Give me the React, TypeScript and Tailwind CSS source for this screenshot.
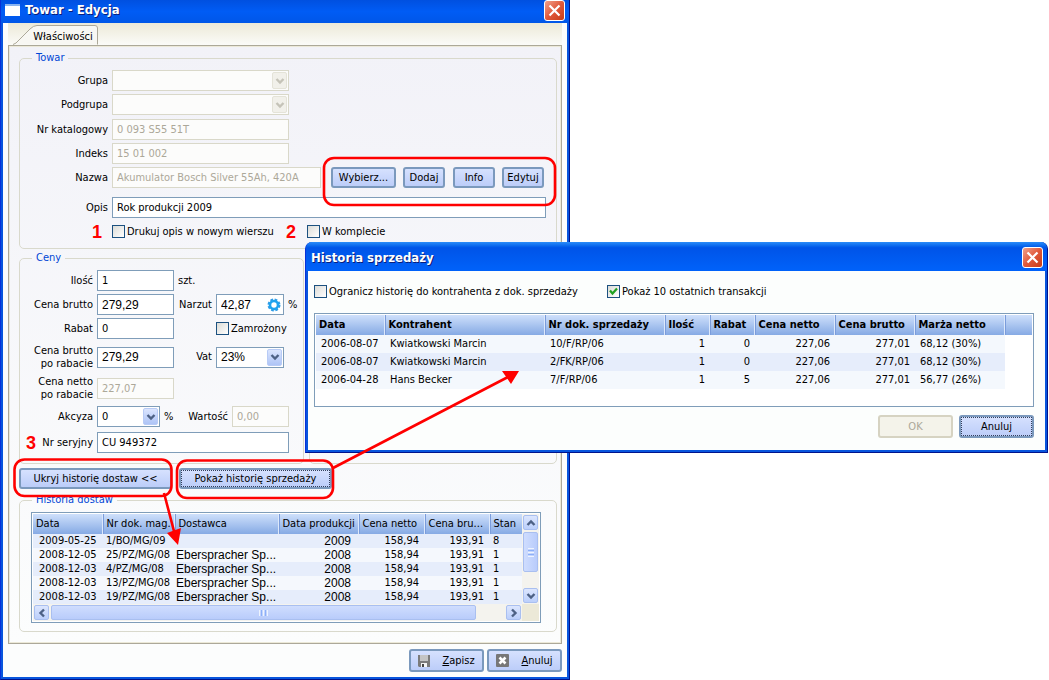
import React from 'react';
import { clsx } from 'clsx';

interface Delivery {
  date: string;
  doc: string;
  supplier: string;
  year: string;
  net: string;
  gross: string;
  stock: string;
}

interface Sale {
  date: string;
  client: string;
  doc: string;
  qty: string;
  discount: string;
  net: string;
  gross: string;
  margin: string;
}

const deliveries: Delivery[] = [
  { date: '2009-05-25', doc: '1/BO/MG/09', supplier: '', year: '2009', net: '158,94', gross: '193,91', stock: '8' },
  { date: '2008-12-05', doc: '25/PZ/MG/08', supplier: 'Eberspracher Sp...', year: '2008', net: '158,94', gross: '193,91', stock: '1' },
  { date: '2008-12-03', doc: '4/PZ/MG/08', supplier: 'Eberspracher Sp...', year: '2008', net: '158,94', gross: '193,91', stock: '1' },
  { date: '2008-12-03', doc: '13/PZ/MG/08', supplier: 'Eberspracher Sp...', year: '2008', net: '158,94', gross: '193,91', stock: '1' },
  { date: '2008-12-03', doc: '19/PZ/MG/08', supplier: 'Eberspracher Sp...', year: '2008', net: '158,94', gross: '193,91', stock: '1' },
];

const sales: Sale[] = [
  { date: '2006-08-07', client: 'Kwiatkowski Marcin', doc: '10/F/RP/06', qty: '1', discount: '0', net: '227,06', gross: '277,01', margin: '68,12 (30%)' },
  { date: '2006-08-07', client: 'Kwiatkowski Marcin', doc: '2/FK/RP/06', qty: '1', discount: '0', net: '227,06', gross: '277,01', margin: '68,12 (30%)' },
  { date: '2006-04-28', client: 'Hans Becker', doc: '7/F/RP/06', qty: '1', discount: '5', net: '227,06', gross: '277,01', margin: '56,77 (26%)' },
];

const chevrons = {
  down: 'M0.500 2L4 5.500 7.500 2',
  up: 'M0.500 6L4 2.500 7.500 6',
  left: 'M6 0.500L2.500 4 6 7.500',
  right: 'M2 0.500L5.500 4 2 7.500',
};

function Chevron({ dir }: { dir: keyof typeof chevrons }) {
  return (
    <svg viewBox="0 0 8 8" className="h-2 w-2 overflow-visible" fill="none" stroke="currentColor" strokeWidth="2.4">
      <path d={chevrons[dir]} />
    </svg>
  );
}

function CloseButton() {
  return (
    <button
      aria-label="Zamknij"
      className="flex h-[21px] w-[21px] items-center justify-center rounded-[3px] border border-white bg-linear-to-br from-[#f0a08a] via-[#e0583a] to-[#c83c14]"
    >
      <svg viewBox="0 0 13 13" className="h-[13px] w-[13px]" stroke="#fff" strokeWidth="2.2">
        <path d="M1.500 1.500l10 10M11.500 1.500l-10 10" />
      </svg>
    </button>
  );
}

interface TextFieldProps {
  id: string;
  value: string;
  className: string;
  disabled?: boolean;
  large?: boolean;
}

function TextField({ id, value, className, disabled, large }: TextFieldProps) {
  return (
    <input
      id={id}
      type="text"
      defaultValue={value}
      disabled={disabled}
      className={clsx(
        'h-[21px] min-w-0 border px-1 outline-none',
        large && 'font-["Liberation_Sans",sans-serif] text-[12px]',
        disabled ? 'border-[#d9d8c9] bg-[#fcfcfb] text-[#aca899]' : 'border-[#7f9db9] bg-white text-black',
        className,
      )}
    />
  );
}

function SelectField({ id, value, className, disabled, large }: TextFieldProps) {
  return (
    <div className={clsx('relative h-[21px]', className)}>
      <select
        id={id}
        disabled={disabled}
        defaultValue={value}
        className={clsx(
          'h-full w-full appearance-none border px-1 outline-none',
          large && 'font-["Liberation_Sans",sans-serif] text-[12px]',
          disabled ? 'border-[#d9d8c9] bg-[#fcfcfb] opacity-100' : 'border-[#7f9db9] bg-white text-black',
        )}
      >
        <option value={value}>{value}</option>
      </select>
      <span
        className={clsx(
          'pointer-events-none absolute inset-y-0.5 right-0.5 flex w-[15px] items-center justify-center rounded-[2px] border',
          disabled
            ? 'border-[#e4e3d8] bg-[#f1f0ea] text-[#c5c3b8]'
            : 'border-[#b8cbf6] bg-linear-to-b from-[#dbe5fe] to-[#aec4f6] text-[#4d6185]',
        )}
      >
        <Chevron dir="down" />
      </span>
    </div>
  );
}

function CheckField({ id, label, checked }: { id: string; label: string; checked?: boolean }) {
  return (
    <div className="flex h-[13px] items-center gap-0.5 whitespace-nowrap">
      <span className="relative flex">
        <input
          id={id}
          type="checkbox"
          defaultChecked={checked}
          className="peer h-[13px] w-[13px] appearance-none border border-[#1c5180] bg-linear-to-br from-[#dcdcd7] to-white"
        />
        <svg
          viewBox="0 0 13 13"
          className="pointer-events-none absolute inset-0 hidden h-[13px] w-[13px] peer-checked:block"
          fill="none"
          stroke="#21a121"
          strokeWidth="2.2"
        >
          <path d="M3 5.500l2.500 3L10 3.500" />
        </svg>
      </span>
      <label htmlFor={id}>{label}</label>
    </div>
  );
}

interface PushButtonProps {
  className: string;
  children: React.ReactNode;
  disabled?: boolean;
  focused?: boolean;
}

function PushButton({ className, children, disabled, focused }: PushButtonProps) {
  return (
    <button
      disabled={disabled}
      className={clsx(
        'rounded-[3px] border-2 whitespace-nowrap',
        disabled
          ? 'border-[#d6d3c2] bg-[#f4f3ea] text-[#aca899]'
          : 'border-[#7b99bd] bg-linear-to-b from-[#d6e1fe] to-[#bccdf9] text-black',
        className,
      )}
    >
      <span
        className={clsx(
          'flex h-full w-full items-center justify-center border',
          focused ? 'border-dotted border-[#33405c]' : 'border-transparent',
        )}
      >
        {children}
      </span>
    </button>
  );
}

function Group({ title, className, children }: { title: string; className?: string; children?: React.ReactNode }) {
  return (
    <fieldset className={clsx('min-w-0 rounded-[5px] border border-[#d9d9cc] pt-[5px]', className)}>
      <legend className="ml-3 h-3.5 px-1 leading-[14px] text-[#0046d5]">{title}</legend>
      {children}
    </fieldset>
  );
}

function ItemLabel({ htmlFor, children }: { htmlFor: string; children: React.ReactNode }) {
  return (
    <label htmlFor={htmlFor} className="w-[88px] shrink-0 text-right whitespace-nowrap">
      {children}
    </label>
  );
}

function PriceLabel({ htmlFor, children }: { htmlFor: string; children: React.ReactNode }) {
  return (
    <label htmlFor={htmlFor} className="flex w-[73px] shrink-0 flex-col text-right leading-[13px] whitespace-nowrap">
      {children}
    </label>
  );
}

function SideLabel({ htmlFor, children }: { htmlFor: string; children: React.ReactNode }) {
  return (
    <label htmlFor={htmlFor} className="flex w-[34px] shrink-0 justify-end">
      {children}
    </label>
  );
}

function Marker({ children }: { children: React.ReactNode }) {
  return (
    <span className='font-["Liberation_Sans",sans-serif] text-[18px] leading-none font-bold text-[#ff0000]'>
      {children}
    </span>
  );
}

function ScrollButton({ dir, label }: { dir: keyof typeof chevrons; label: string }) {
  return (
    <button
      aria-label={label}
      className="flex h-[15px] w-[15px] shrink-0 items-center justify-center rounded-[2px] border border-[#a9bff0] bg-linear-to-b from-[#dce6fe] to-[#bbcffb] text-[#4d6185]"
    >
      <Chevron dir={dir} />
    </button>
  );
}

function ItemGroup() {
  return (
    <Group title="Towar" className="pr-2.5 pb-2.5">
      <div className="flex flex-col gap-1">
        <div className="flex flex-col gap-[3px]">
          <div className="flex items-center gap-1">
            <ItemLabel htmlFor="group">Grupa</ItemLabel>
            <SelectField id="group" value="" disabled className="w-[177px]" />
          </div>
          <div className="flex items-center gap-1">
            <ItemLabel htmlFor="subgroup">Podgrupa</ItemLabel>
            <SelectField id="subgroup" value="" disabled className="w-[177px]" />
          </div>
        </div>
        <div className="flex flex-col gap-[3px]">
          <div className="flex items-center gap-1">
            <ItemLabel htmlFor="catalog">Nr katalogowy</ItemLabel>
            <TextField id="catalog" value="0 093 S55 51T" disabled className="w-[177px]" />
          </div>
          <div className="flex items-center gap-1">
            <ItemLabel htmlFor="index">Indeks</ItemLabel>
            <TextField id="index" value="15 01 002" disabled className="w-[177px]" />
          </div>
          <div className="flex items-center gap-1">
            <ItemLabel htmlFor="name">Nazwa</ItemLabel>
            <TextField id="name" value="Akumulator Bosch Silver 55Ah, 420A" disabled className="flex-1" />
            <div className="flex gap-[7px] pr-0.5 pl-1.5">
              <PushButton className="h-[21px] w-[65px]">Wybierz...</PushButton>
              <PushButton className="mr-px h-[21px] w-[42px]">Dodaj</PushButton>
              <PushButton className="h-[21px] w-[42px]">Info</PushButton>
              <PushButton className="h-[21px] w-[42px]">Edytuj</PushButton>
            </div>
          </div>
        </div>
      </div>
      <div className="mt-[9px] flex items-center gap-1">
        <ItemLabel htmlFor="description">Opis</ItemLabel>
        <TextField id="description" value="Rok produkcji 2009" className="flex-1" />
      </div>
      <div className="mt-[7px] flex h-[13px] items-center">
        <div className="flex w-[92px] justify-end pr-2.5">
          <Marker>1</Marker>
        </div>
        <div className="w-[174px]">
          <CheckField id="print-desc" label="Drukuj opis w nowym wierszu" />
        </div>
        <div className="flex w-[21px]">
          <Marker>2</Marker>
        </div>
        <CheckField id="in-set" label="W komplecie" />
      </div>
    </Group>
  );
}

function PriceGroup() {
  return (
    <Group title="Ceny" className="w-[285px] pb-2.5">
      <div className="flex flex-col gap-[5px]">
        <div className="flex flex-col gap-[3px]">
          <div className="flex items-center gap-1">
            <PriceLabel htmlFor="qty">Ilość</PriceLabel>
            <TextField id="qty" value="1" className="w-[77px]" />
            <span>szt.</span>
          </div>
          <div className="flex items-center gap-1">
            <PriceLabel htmlFor="gross">Cena brutto</PriceLabel>
            <TextField id="gross" value="279,29" large className="w-[77px]" />
            <SideLabel htmlFor="markup">Narzut</SideLabel>
            <div className="relative flex">
              <TextField id="markup" value="42,87" large className="w-[68px]" />
              <button aria-label="Przelicz" className="absolute inset-y-0 right-[3px] flex items-center">
                <svg viewBox="0 0 14 14" className="h-3.5 w-3.5" fill="none">
                  <circle cx="7" cy="7" r="5.500" stroke="#2f9be6" strokeWidth="2" strokeDasharray="2.700 1.620" />
                  <circle cx="7" cy="7" r="4" stroke="#1fa2ee" strokeWidth="2.600" />
                </svg>
              </button>
            </div>
            <span>%</span>
          </div>
          <div className="flex items-center gap-1">
            <PriceLabel htmlFor="discount">Rabat</PriceLabel>
            <TextField id="discount" value="0" className="w-[77px]" />
            <div className="pl-[38px]">
              <CheckField id="frozen" label="Zamrożony" />
            </div>
          </div>
        </div>
        <div className="flex h-[26px] items-center gap-1">
          <PriceLabel htmlFor="gross-after">
            <span>Cena brutto</span>
            <span>po rabacie</span>
          </PriceLabel>
          <TextField id="gross-after" value="279,29" large className="w-[77px]" />
          <SideLabel htmlFor="vat">Vat</SideLabel>
          <SelectField id="vat" value="23%" large className="w-[68px]" />
        </div>
        <div className="flex h-[26px] items-center gap-1">
          <PriceLabel htmlFor="net-after">
            <span>Cena netto</span>
            <span>po rabacie</span>
          </PriceLabel>
          <TextField id="net-after" value="227,07" disabled className="w-[77px]" />
        </div>
        <div className="flex items-center gap-1 pr-3.5">
          <PriceLabel htmlFor="excise">Akcyza</PriceLabel>
          <SelectField id="excise" value="0" className="w-[63px]" />
          <span>%</span>
          <label htmlFor="excise-value" className="flex-1 text-right">
            Wartość
          </label>
          <TextField id="excise-value" value="0,00" disabled className="w-[57px]" />
        </div>
        <div className="flex items-center gap-1 pr-3.5">
          <div className="flex w-[73px] items-center justify-between pl-1.5">
            <Marker>3</Marker>
            <label htmlFor="serial">Nr seryjny</label>
          </div>
          <TextField id="serial" value="CU 949372" className="flex-1" />
        </div>
      </div>
    </Group>
  );
}

const headerCell =
  'border-r border-[#7a9cdb] pr-1 pl-[3px] text-left shadow-[inset_-1px_0_#dce8fb] last:border-r-0 last:shadow-none';

function DeliveryTable() {
  return (
    <div className="mr-[15px] ml-[11px] flex border border-[#7f9db9] bg-white p-px">
      <div className="min-w-0 flex-1">
        <table className="w-full table-fixed border-collapse whitespace-nowrap">
          <colgroup>
            <col className="w-[70px]" />
            <col className="w-[72px]" />
            <col />
            <col className="w-[80px]" />
            <col className="w-[66px]" />
            <col className="w-[65px]" />
            <col className="w-[32px]" />
          </colgroup>
          <thead>
            <tr className="h-5 bg-linear-to-b from-[#cfe0fb] to-[#86aae4]">
              {['Data', 'Nr dok. mag.', 'Dostawca', 'Data produkcji', 'Cena netto', 'Cena bru...', 'Stan'].map((h) => (
                <th key={h} className={clsx(headerCell, 'font-normal')}>
                  {h}
                </th>
              ))}
            </tr>
          </thead>
          <tbody className="leading-[14px]">
            {deliveries.map((d, i) => (
              <tr key={i} className="h-3.5 odd:bg-[#e6edfb] even:bg-[#f5f8fd]">
                <td className="pl-1.5">{d.date}</td>
                <td className="pl-[3px]">{d.doc}</td>
                <td className='pl-px font-["Liberation_Sans",sans-serif] text-[12px]'>{d.supplier}</td>
                <td className='pr-2 text-right font-["Liberation_Sans",sans-serif] text-[12px]'>{d.year}</td>
                <td className="pr-1.5 text-right">{d.net}</td>
                <td className="pr-1.5 text-right">{d.gross}</td>
                <td className="pl-[3px]">{d.stock}</td>
              </tr>
            ))}
          </tbody>
        </table>
        <div className="flex h-[17px] items-center gap-0.5 bg-[#f4f3ee] px-px">
          <ScrollButton dir="left" label="Przewiń w lewo" />
          <div className="flex h-[15px] w-[425px] items-center justify-center gap-px rounded-[2px] border border-[#a9bff0] bg-linear-to-b from-[#cfddfe] to-[#b9ccfb]">
            <span className="h-1.5 w-px bg-[#eef4fe]" />
            <span className="h-1.5 w-px bg-[#8cb0f8]" />
            <span className="h-1.5 w-px bg-[#eef4fe]" />
            <span className="h-1.5 w-px bg-[#8cb0f8]" />
            <span className="h-1.5 w-px bg-[#eef4fe]" />
          </div>
          <div className="flex-1" />
          <ScrollButton dir="right" label="Przewiń w prawo" />
        </div>
      </div>
      <div className="flex w-[17px] flex-col">
        <div className="flex flex-1 flex-col items-center gap-0.5 bg-[#f4f3ee] py-px">
          <ScrollButton dir="up" label="Przewiń w górę" />
          <div className="flex h-10 w-[15px] flex-col items-center justify-center gap-px rounded-[2px] border border-[#a9bff0] bg-linear-to-r from-[#cfddfe] to-[#b9ccfb]">
            <span className="h-px w-1.5 bg-[#eef4fe]" />
            <span className="h-px w-1.5 bg-[#8cb0f8]" />
            <span className="h-px w-1.5 bg-[#eef4fe]" />
            <span className="h-px w-1.5 bg-[#8cb0f8]" />
            <span className="h-px w-1.5 bg-[#eef4fe]" />
          </div>
          <div className="flex-1" />
          <ScrollButton dir="down" label="Przewiń w dół" />
        </div>
        <div className="h-[17px] bg-[#ece9d8]" />
      </div>
    </div>
  );
}

function ItemWindow() {
  return (
    <section className="w-full max-w-[570px] border-r border-b border-l border-r-[#00138c] border-b-[#00138c] border-l-[#0831d9]">
      <header className="flex h-[23px] items-start justify-between bg-linear-to-b from-[#0050e0] via-[#005cf5] to-[#0056e8] pr-1 pl-1">
        <div className="flex items-center gap-[5px]">
          <span className="h-3 w-[15px] border-t-2 border-t-[#8ab4f0] bg-white" />
          <h1 className="text-[13px] leading-5 font-bold text-white [text-shadow:1px_1px_#0a1e7a]">Towar - Edycja</h1>
        </div>
        <CloseButton />
      </header>
      <div className="border-x-2 border-b-2 border-[#0855dd] bg-[#fcfdfd] px-[5px] pb-[5px]">
        <div className="flex h-[22px] items-end bg-linear-to-b from-[#ece9d8] to-[#fbfbf8] pl-[5px]">
          <div className="relative z-10 flex h-[21px] w-[86px]">
            <svg viewBox="0 0 86 21" className="absolute inset-0 h-[21px] w-[86px]" fill="#f8f7f3" stroke="#aca899">
              <path d="M0 20.500L3 19 17 5Q20.500 1.500 24 1.500H82Q84.500 1.500 84.500 4V20.500" />
            </svg>
            <button className="relative w-full pt-1 pl-3.5 text-center">Właściwości</button>
          </div>
        </div>
        <div className="border border-[#aca899] bg-linear-to-b from-[#f2f2f8] to-[#fcfdfd]">
          <div className="border border-[#ece9d8] pt-1 pr-[3px] pb-2.5 pl-[9px]">
            <ItemGroup />
            <div className="mt-0.5 flex gap-[5px]">
              <PriceGroup />
              <Group title="" className="flex-1" />
            </div>
            <div className="my-1 flex gap-[7px]">
              <PushButton className="h-[21px] w-[153px]">Ukryj historię dostaw &lt;&lt;</PushButton>
              <PushButton className="h-[21px] w-[153px]" focused>
                Pokaż historię sprzedaży
              </PushButton>
            </div>
            <Group title="Historia dostaw" className="pb-2">
              <DeliveryTable />
            </Group>
          </div>
        </div>
        <footer className="mt-[5px] flex justify-end gap-[3px]">
          <PushButton className="h-[23px] w-[75px]">
            <svg viewBox="0 0 12 12" className="mr-3 h-3 w-3">
              <path d="M0 0h12v12H1L0 11z" fill="#7b7b7b" />
              <path d="M2 0h8v6H2z" fill="#c4c4c4" />
              <path d="M3 8h6v4H3z" fill="#f4f4f4" />
              <path d="M4 9h2v3H4z" fill="#444" />
            </svg>
            <span>
              <u>Z</u>apisz
            </span>
          </PushButton>
          <PushButton className="h-[23px] w-[75px]">
            <svg viewBox="0 0 13 13" className="mr-3 h-[13px] w-[13px]">
              <rect width="13" height="13" rx="1" fill="#777" />
              <path d="M3.500 3.500l6 6M9.500 3.500l-6 6" stroke="#fff" strokeWidth="2.600" />
            </svg>
            <span>
              <u>A</u>nuluj
            </span>
          </PushButton>
        </footer>
      </div>
    </section>
  );
}

function SalesTable() {
  return (
    <div className="h-[94px] border border-[#7f9db9] bg-white p-px">
      <table className="w-full table-fixed border-collapse whitespace-nowrap">
        <colgroup>
          <col className="w-[69px]" />
          <col className="w-[160px]" />
          <col className="w-[120px]" />
          <col className="w-[45px]" />
          <col className="w-[45px]" />
          <col className="w-[80px]" />
          <col className="w-[80px]" />
          <col className="w-[90px]" />
          <col />
        </colgroup>
        <thead>
          <tr className="h-5 bg-linear-to-b from-[#cfe0fb] to-[#86aae4]">
            {['Data', 'Kontrahent', 'Nr dok. sprzedaży', 'Ilość', 'Rabat', 'Cena netto', 'Cena brutto', 'Marża netto', ''].map((h) => (
              <th key={h} className={clsx(headerCell, 'font-bold')}>
                {h}
              </th>
            ))}
          </tr>
        </thead>
        <tbody>
          {sales.map((s, i) => (
            <tr key={i} className="group h-[18px]">
              {[s.date, s.client, s.doc].map((text, c) => (
                <td key={c} className="pl-[5px] group-odd:bg-[#f4f8fd] group-even:bg-[#e6edfb]">
                  {text}
                </td>
              ))}
              {[s.qty, s.discount, s.net, s.gross].map((text, c) => (
                <td key={c} className="pr-[5px] text-right group-odd:bg-[#f4f8fd] group-even:bg-[#e6edfb]">
                  {text}
                </td>
              ))}
              <td className="pl-[5px] group-odd:bg-[#f4f8fd] group-even:bg-[#e6edfb]">{s.margin}</td>
              <td />
            </tr>
          ))}
        </tbody>
      </table>
    </div>
  );
}

function SalesDialog() {
  return (
    <section
      role="dialog"
      aria-labelledby="sales-title"
      className="absolute top-[242px] right-px left-[305px] rounded-t-[7px] border-r border-b border-l border-r-[#00138c] border-b-[#00138c] border-l-[#0831d9] bg-[#0855dd]"
    >
      <header className="flex h-[29px] items-center justify-between rounded-t-[6px] bg-linear-to-b from-[#2a8cf8] from-0% via-[#0054e8] via-20% to-[#0062fa] pt-0.5 pr-1 pl-[5px]">
        <h2 id="sales-title" className="text-[13px] font-bold text-white [text-shadow:1px_1px_#0a1e7a]">
          Historia sprzedaży
        </h2>
        <CloseButton />
      </header>
      <div className="mx-0.5 mb-0.5 bg-[#fcfefd] pt-3.5 pr-[11px] pb-3 pl-1.5">
        <div className="flex">
          <div className="w-[293px]">
            <CheckField id="limit-client" label="Ogranicz historię do kontrahenta z dok. sprzedaży" />
          </div>
          <CheckField id="last-ten" label="Pokaż 10 ostatnich transakcji" checked />
        </div>
        <div className="mt-[15px]">
          <SalesTable />
        </div>
        <div className="mt-2 flex justify-end gap-1.5">
          <PushButton className="h-[23px] w-[75px]" disabled>
            OK
          </PushButton>
          <PushButton className="h-[23px] w-[75px]" focused>
            Anuluj
          </PushButton>
        </div>
      </div>
    </section>
  );
}

// Red frames and arrows drawn over both windows
function Annotations() {
  return (
    <svg
      viewBox="0 0 570 680"
      className="pointer-events-none absolute top-0 left-0 h-[680px] w-[570px]"
      fill="none"
      stroke="#ff0000"
      strokeWidth="2.6"
    >
      <rect x="324" y="158" width="231" height="47" rx="10" />
      <rect x="14.500" y="459.500" width="157" height="36.500" rx="10" />
      <rect x="177" y="460.500" width="156" height="37.500" rx="10" />
      <path d="M333 468L508 377M164 493l11 42" />
      <path d="M519 371h-17l9 13zM178 545l-11-12 14-5z" fill="#ff0000" stroke="none" />
    </svg>
  );
}

export default function App() {
  return (
    <main className='relative min-h-screen bg-white font-["DejaVu_Sans_Condensed","DejaVu_Sans",sans-serif] text-[11px] leading-[14px] text-black'>
      <ItemWindow />
      <SalesDialog />
      <Annotations />
    </main>
  );
}
